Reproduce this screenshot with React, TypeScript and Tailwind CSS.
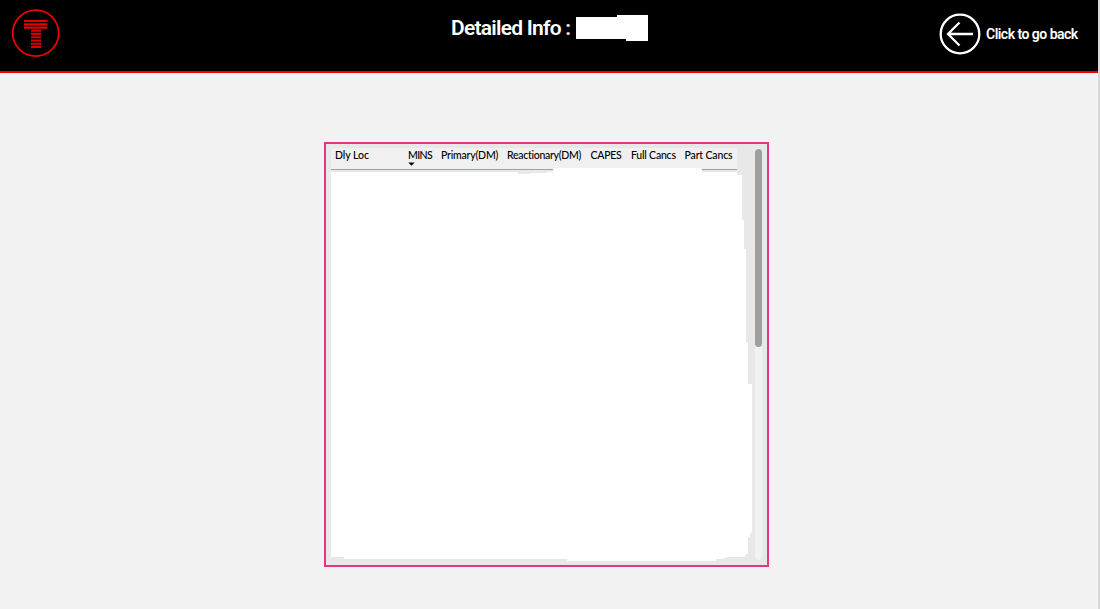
import React from 'react';

const columns = [
  { label: 'Dly Loc', width: 'w-[73px]', tracking: 'tracking-[-0.05px]' },
  { label: 'MINS', width: 'w-[33px]', tracking: 'tracking-[-0.6px]', sorted: true },
  { label: 'Primary(DM)', width: 'w-[66px]', tracking: 'tracking-[-0.2px]' },
  { label: 'Reactionary(DM)', width: 'w-[83.5px]', tracking: 'tracking-[-0.28px]' },
  { label: 'CAPES', width: 'w-[40.5px]', tracking: 'tracking-[-0.25px]' },
  { label: 'Full Cancs', width: 'w-[53.5px]', tracking: 'tracking-[-0.2px]' },
  { label: 'Part Cancs', width: 'w-[52px]', tracking: 'tracking-[-0.15px]' },
];

function Logo() {
  return (
    <svg className="ml-[11px] mt-[9px] size-[50px] shrink-0" viewBox="0 0 50 50" fill="none">
      <circle cx="24.7" cy="24.2" r="23" stroke="#f00000" strokeWidth="1.8" />
      <path d="M13 12H36.5M13 15.3H36.5M13 18.6H36.5" stroke="#e80000" strokeWidth="2.2" />
      <path d="M20 21.7H30M20 24.9H30M20 28.2H30M20 31.5H30M20 34.8H30M20 38H30" stroke="#d80000" strokeWidth="2.1" />
    </svg>
  );
}

function Header() {
  return (
    <header className="flex h-[73px] w-[1098px] items-start justify-between border-b-2 border-[#f00000] bg-black text-white">
      <Logo />
      <div className="ml-[390px] mt-[13px] flex h-7 items-start">
        <h1 className="w-[125px] whitespace-nowrap font-['Roboto'] text-[21px] font-semibold leading-[30px] tracking-[-0.76px]">Detailed Info :</h1>
        <svg className="mt-[2px] h-[26px] w-[72px]" viewBox="0 0 72 26">
          <path d="M0 2H41V0H72V26H50V24H0Z" fill="#fff" />
        </svg>
      </div>
      <button className="ml-auto mr-[19px] mt-[13px] flex items-center gap-[5px]">
        <svg className="size-[42px]" viewBox="0 0 42 42" fill="none" stroke="#fff" strokeWidth="2.3">
          <circle cx="21" cy="21" r="19.3" />
          <path d="M34 21H9M20.5 9.5L9 21L20.5 32.5" />
        </svg>
        <span className="w-[93px] whitespace-nowrap text-left font-['Roboto'] text-[14px] font-semibold leading-5 tracking-[-0.52px]">Click to go back</span>
      </button>
    </header>
  );
}

function DetailTable() {
  return (
    <section className="relative ml-[324px] mt-[69px] flex h-[425px] w-[445px] justify-between border-2 border-[#e83583] bg-[#e8e8e8] pl-[5px] pr-[5px] pt-1">
      <div className="flex h-[22px] w-[406px] border-b border-[#e57f92] bg-[#f0f0f0] pl-[4px] pt-[1px]">
        {columns.map((column) => (
          <div key={column.label} className={`${column.width} shrink-0`}>
            <div className={`whitespace-nowrap font-['Lato'] text-[10.5px] font-medium leading-[13px] text-black ${column.tracking}`}>{column.label}</div>
            {column.sorted && (
              <svg className="h-[4px] w-[7px]" viewBox="0 0 7 4"><path d="M.3 .5H6.7L3.5 3.8Z" fill="#000" /></svg>
            )}
          </div>
        ))}
      </div>
      <div className="h-[412px] w-[7px] rounded-full bg-[#f2f2f2]">
        <div className="mt-px h-[198px] w-[7px] rounded-full bg-[#a19f9d]" />
      </div>
      <svg className="pointer-events-none absolute -left-[2px] -top-[2px] h-[425px] w-[445px]" viewBox="324 142 445 425" shapeRendering="crispEdges">
        <path fill="#fff" d="M331 172H518V174H530V173H547V172H553V168H702V172H737V175H742V220H744V249H746V343H748V384H752V532H751V534H750V537H748V554H746V555H745V557H726V558H724V559H716V561H567V559H344V557H331Z" />
      </svg>
    </section>
  );
}

export default function App() {
  return (
    <main className="h-[609px] w-[1100px] overflow-hidden border-r-2 border-[#d9d9d9] bg-[#f2f2f2]">
      <Header />
      <DetailTable />
    </main>
  );
}
